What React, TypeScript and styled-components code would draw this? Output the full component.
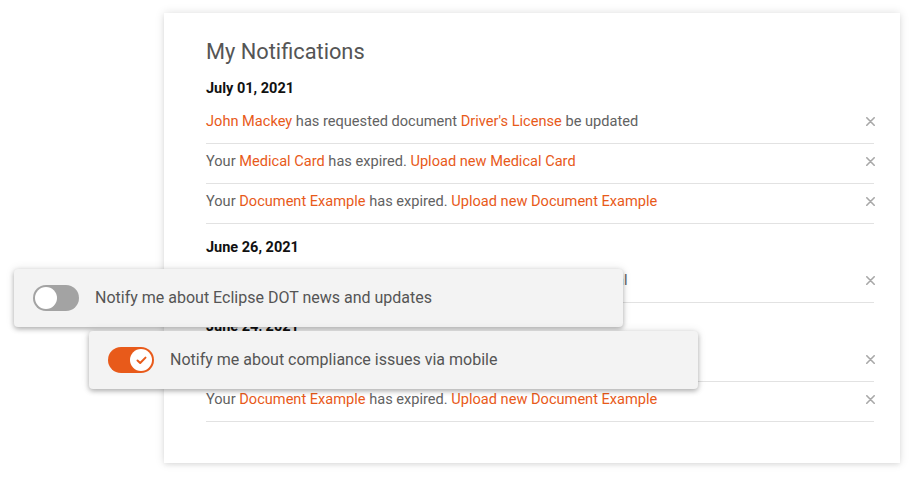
import React from "react";
import styled, { createGlobalStyle } from "styled-components";

const Global = createGlobalStyle`
  html, body { margin: 0; padding: 0; background: #ffffff; }
  body { font-family: Roboto, "Liberation Sans", Arial, sans-serif; }
  * { box-sizing: border-box; }
`;

const ORANGE = "#e85a1a";

const Stage = styled.div`
  position: relative;
  width: 913px;
  height: 477px;
  overflow: hidden;
  padding: 13px 0 0 164px;
`;

const Card = styled.section`
  width: 736px;
  height: 450px;
  background: #fff;
  box-shadow: 0 0 9px rgba(0, 0, 0, 0.13), 0 2px 4px rgba(0, 0, 0, 0.06);
  padding: 27px 26px 0 42px;
  display: flex;
  flex-direction: column;
`;

const Title = styled.h1`
  margin: 0 0 15px;
  font-size: 21.8px;
  line-height: 24px;
  font-weight: 400;
  color: #555;
`;

const Group = styled.div`
  display: flex;
  flex-direction: column;
  & + & { margin-top: 14px; }
`;

const DateLabel = styled.div`
  font-size: 14.5px;
  line-height: 20px;
  font-weight: 700;
  color: #111;
  margin-bottom: 5px;
`;

const Row = styled.div`
  display: flex;
  align-items: center;
  justify-content: space-between;
  padding: 7px 0 11px;
  border-bottom: 1px solid #e2e2e2;
`;

const Message = styled.span`
  font-size: 14.6px;
  line-height: 21px;
  color: #626262;
  white-space: nowrap;
`;

const Link = styled.a`
  color: ${ORANGE};
  text-decoration: none;
`;

const Close = styled.button`
  border: 0;
  background: none;
  padding: 0;
  margin-right: -1px;
  width: 9px;
  height: 9px;
  display: flex;
  cursor: pointer;
`;

const ToggleCard = styled.div<{ $left: number; $top: number }>`
  position: absolute;
  left: ${(p) => p.$left}px;
  top: ${(p) => p.$top}px;
  width: 609px;
  height: 58px;
  background: #f3f3f3;
  border-radius: 4px;
  box-shadow: 0 2px 5px rgba(0, 0, 0, 0.28), 0 0 10px rgba(0, 0, 0, 0.1);
  display: flex;
  align-items: center;
  padding-left: 19px;
  gap: 16px;
`;

const Track = styled.div<{ $on: boolean }>`
  width: 46px;
  height: 26px;
  border-radius: 13px;
  background: ${(p) => (p.$on ? ORANGE : "#a3a3a3")};
  display: flex;
  align-items: center;
  justify-content: ${(p) => (p.$on ? "flex-end" : "flex-start")};
  padding: 0 2px;
  flex-shrink: 0;
`;

const Knob = styled.div`
  width: 22px;
  height: 22px;
  border-radius: 50%;
  background: #fff;
  display: flex;
  align-items: center;
  justify-content: center;
`;

const ToggleText = styled.span`
  font-size: 16px;
  line-height: 20px;
  color: #555;
`;

const XIcon = () => (
  <svg width="9" height="9" viewBox="0 0 9 9">
    <path d="M0.8 0.8 L8.2 8.2 M8.2 0.8 L0.8 8.2" stroke="#a8a8a8" strokeWidth="1.6" strokeLinecap="round" />
  </svg>
);

const Check = () => (
  <svg width="11" height="9" viewBox="0 0 11 9">
    <path d="M1.5 4.5 L4.2 7 L9.5 1.6" fill="none" stroke={ORANGE} strokeWidth="2" strokeLinecap="round" strokeLinejoin="round" />
  </svg>
);

type Part = string | { link: string };
type Group_ = { date: string; rows: Part[][] };

const groups: Group_[] = [
  {
    date: "July 01, 2021",
    rows: [
      [{ link: "John Mackey" }, " has requested document ", { link: "Driver's License" }, " be updated"],
      ["Your ", { link: "Medical Card" }, " has expired. ", { link: "Upload new Medical Card" }],
      ["Your ", { link: "Document Example" }, " has expired. ", { link: "Upload new Document Example" }],
    ],
  },
  {
    date: "June 26, 2021",
    rows: [[{ link: "John Mackey" }, " has requested document ", { link: "Medical Card" }, " for approval"]],
  },
  {
    date: "June 24, 2021",
    rows: [
      ["Your ", { link: "Medical Card" }, " has expired. ", { link: "Upload new Medical Card" }],
      ["Your ", { link: "Document Example" }, " has expired. ", { link: "Upload new Document Example" }],
    ],
  },
];

const Toggle = ({ on }: { on: boolean }) => (
  <Track $on={on}>
    <Knob>{on && <Check />}</Knob>
  </Track>
);

export default function App() {
  return (
    <>
      <Global />
      <Stage>
        <Card>
          <Title>My Notifications</Title>
          {groups.map((g) => (
            <Group key={g.date}>
              <DateLabel>{g.date}</DateLabel>
              {g.rows.map((r, i) => (
                <Row key={i}>
                  <Message>
                    {r.map((p, j) =>
                      typeof p === "string" ? p : <Link key={j}>{p.link}</Link>
                    )}
                  </Message>
                  <Close aria-label="Dismiss">
                    <XIcon />
                  </Close>
                </Row>
              ))}
            </Group>
          ))}
        </Card>
        <ToggleCard $left={14} $top={269}>
          <Toggle on={false} />
          <ToggleText>Notify me about Eclipse DOT news and updates</ToggleText>
        </ToggleCard>
        <ToggleCard $left={89} $top={331}>
          <Toggle on={true} />
          <ToggleText>Notify me about compliance issues via mobile</ToggleText>
        </ToggleCard>
      </Stage>
    </>
  );
}
